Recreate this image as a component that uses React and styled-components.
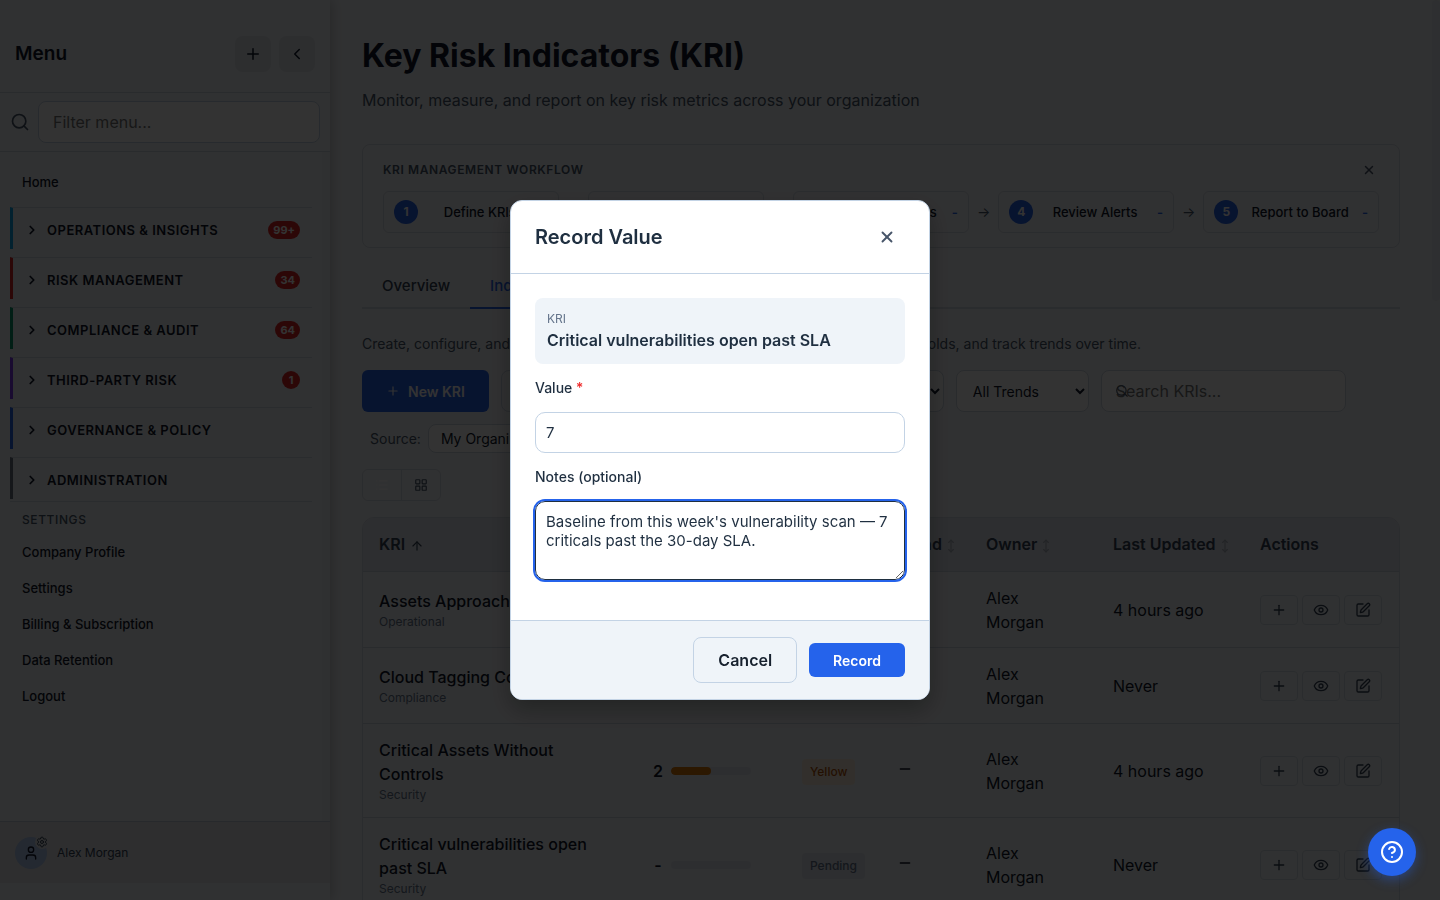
import React, { useState } from 'react';
import styled, { createGlobalStyle } from 'styled-components';
import {
  Plus,
  Minus,
  ChevronLeft,
  ChevronRight,
  Search,
  User,
  Settings,
  X,
  List,
  LayoutGrid,
  ArrowUp,
  MoveVertical,
  Eye,
  SquarePen,
  CircleQuestionMark,
} from 'lucide-react';

const GlobalStyle = createGlobalStyle`
  * {
    box-sizing: border-box;
  }
  body {
    margin: 0;
    background: #f1f5f9;
    color: #0f172a;
    font-family: Inter, "Liberation Sans", sans-serif;
    font-size: 16px;
    line-height: 24px;
  }
  button, input, select, textarea {
    font-family: inherit;
  }
  button {
    cursor: pointer;
  }
`;

const Shell = styled.div`
  display: flex;
  height: 100vh;
  overflow: hidden;
`;

/* ---------- Sidebar ---------- */

const Sidebar = styled.aside`
  display: flex;
  flex-direction: column;
  flex: 0 0 330px;
  padding-bottom: 17px;
  background: #eff3f7;
  box-shadow: 2px 0 12px rgba(0, 0, 0, 0.2);
  z-index: 1;
`;

const SidebarHeader = styled.div`
  display: flex;
  align-items: center;
  gap: 8px;
  padding: 36px 15px 20px;
  border-bottom: 1px solid #cbd5e1;
`;

const SidebarTitle = styled.h2`
  flex: 1;
  margin: 0;
  font-size: 19px;
  font-weight: 600;
`;

const SquareButton = styled.button`
  display: grid;
  place-items: center;
  width: 36px;
  height: 36px;
  padding: 0;
  border: 0;
  border-radius: 8px;
  background: #e0e4ea;
  color: #0f172a;
`;

const FilterRow = styled.div`
  display: flex;
  align-items: center;
  gap: 8px;
  padding: 8px 10px;
  border-bottom: 1px solid #cbd5e1;
  color: #475569;
`;

const FilterInput = styled.input`
  flex: 1;
  min-width: 0;
  height: 42px;
  padding: 0 14px;
  border: 1px solid #c3d3e5;
  border-radius: 8px;
  background: #fff;
  font-size: 16px;
`;

const Nav = styled.nav`
  flex: 1;
  min-height: 0;
  padding: 20px 10px 0;
  overflow: hidden;
  border-right: 8px solid #eaeef3;
`;

const NavLink = styled.a`
  display: block;
  padding: 0 12px;
  margin-bottom: 16px;
  color: #0f172a;
  font-size: 13px;
  font-weight: 500;
  line-height: 20px;
  text-decoration: none;
`;

const NavGroups = styled.div`
  margin-top: -1px;
`;

const NavGroup = styled.button`
  display: flex;
  align-items: center;
  width: 100%;
  height: 42px;
  margin-bottom: 8px;
  padding: 2px 12px 0 12px;
  border: 0;
  border-top: 1px solid #d3dbe4;
  border-left: 3px solid ${(props) => props.$color};
  background: none;
  color: #0f172a;
  font-size: 13px;
  font-weight: 600;
  letter-spacing: 0.5px;
  text-align: left;

  span {
    flex: 1;
    margin-left: 8px;
  }
`;

const Count = styled.b`
  min-width: 18px;
  padding: 0 5px;
  border-radius: 9px;
  background: #dc2626;
  color: #fff;
  font-size: 11px;
  font-weight: 700;
  line-height: 18px;
  letter-spacing: 0;
  text-align: center;
`;

const NavSection = styled.h3`
  margin: -6px 0 12px;
  padding: 8px 12px 0;
  border-top: 1px solid #d3dbe4;
  color: #475569;
  font-size: 12px;
  font-weight: 500;
  line-height: 20px;
  letter-spacing: 0.05em;
`;

const UserBar = styled.div`
  display: flex;
  align-items: center;
  gap: 10px;
  height: 62px;
  padding: 0 15px;
  border-top: 1px solid #c3cedb;
  background: #e3e7ec;
  color: #334155;
  font-size: 12px;
`;

const Avatar = styled.div`
  position: relative;
  display: grid;
  place-items: center;
  width: 32px;
  height: 32px;
  border-radius: 50%;
  background: #b4caf2;
  color: #0f172a;
`;

const AvatarGear = styled.span`
  position: absolute;
  top: -2px;
  right: -2px;
  display: grid;
  place-items: center;
  width: 14px;
  height: 14px;
  border-radius: 50%;
  background: #e3e7ec;
  color: #334155;
`;

/* ---------- Main page ---------- */

const Main = styled.main`
  flex: 1;
  min-width: 0;
  padding: 32px 40px 0 32px;
  overflow: hidden;
`;

const PageTitle = styled.h1`
  margin: 0;
  font-size: 32px;
  font-weight: 700;
  line-height: 48px;
`;

const Subtitle = styled.p`
  margin: 8px 0 32px;
  color: #475569;
`;

const Workflow = styled.section`
  padding: 16px 20px 14px;
  border: 1px solid #d3dbe4;
  border-radius: 8px;
`;

const WorkflowHead = styled.div`
  display: flex;
  justify-content: space-between;
  align-items: center;
  height: 18px;
  margin-bottom: 12px;

  h2 {
    margin: 0;
    color: #475569;
    font-size: 12px;
    font-weight: 600;
    line-height: 18px;
    letter-spacing: 0.05em;
  }
`;

const PlainButton = styled.button`
  display: grid;
  place-items: center;
  width: ${(props) => props.$size}px;
  height: ${(props) => props.$size}px;
  padding: 0;
  border: 0;
  background: none;
  color: #475569;
`;

const Steps = styled.div`
  display: flex;
  align-items: center;
  gap: 8px;
  color: #475569;
  font-size: 14px;
`;

const Step = styled.button`
  display: flex;
  flex: 1;
  align-items: center;
  gap: 8px;
  height: 42px;
  padding: 0 10px;
  border: 1px solid #d3dbe4;
  border-radius: 6px;
  background: none;
  color: #0f172a;
  font-size: 13px;
  font-weight: 500;

  b {
    width: 24px;
    border-radius: 50%;
    background: #2563eb;
    color: #fff;
    font-size: 12px;
    font-weight: 700;
    line-height: 24px;
  }
  span {
    flex: 1;
    white-space: nowrap;
  }
  i {
    color: #2563eb;
    font-style: normal;
    font-weight: 600;
  }
`;

const Tabs = styled.div`
  display: flex;
  margin-top: 16px;
  border-bottom: 2px solid #d3dbe4;
`;

const Tab = styled.button`
  margin-bottom: -2px;
  padding: 10px 20px 9px;
  border: 0;
  border-bottom: 2px solid ${(props) => (props.$active ? '#2563eb' : 'transparent')};
  background: none;
  color: ${(props) => (props.$active ? '#2563eb' : '#334155')};
  font-size: 15px;
  font-weight: 500;
  line-height: 24px;
`;

const Intro = styled.p`
  margin: 23px 0 14px;
  color: #475569;
  font-size: 14px;
  white-space: nowrap;
`;

const Toolbar = styled.div`
  display: flex;
  align-items: center;
  gap: 12px;
`;

const PrimaryButton = styled.button`
  display: flex;
  align-items: center;
  gap: 8px;
  height: 42px;
  padding: 0 24px;
  border: 0;
  border-radius: 6px;
  background: #2563eb;
  color: #fff;
  font-size: 14px;
  font-weight: 600;
`;

const OutlineButton = styled.button`
  width: 119px;
  height: 42px;
  border: 1px solid #cbd5e1;
  border-radius: 8px;
  background: none;
  color: #0f172a;
  font-size: 14px;
  font-weight: 500;
`;

const FilterSelect = styled.select`
  width: ${(props) => props.$width}px;
  height: ${(props) => (props.$small ? 29 : 42)}px;
  padding: 0 ${(props) => (props.$small ? 8 : 12)}px;
  padding-right: 0;
  border: 1px solid #cbd5e1;
  border-radius: 8px;
  background: #fff;
  color: #0f172a;
  font-size: 14px;
`;

const SearchBox = styled.label`
  position: relative;
  flex: 0 1 245px;

  svg {
    position: absolute;
    top: 14px;
    left: 14px;
    color: #475569;
  }
  input {
    width: 100%;
    height: 42px;
    padding: 0 14px;
    border: 1px solid #cbd5e1;
    border-radius: 8px;
    background: #fff;
    font-size: 16px;
  }
`;

const SourceRow = styled.label`
  display: flex;
  align-items: center;
  gap: 7px;
  margin: 12px 0 16px;
  padding-left: 8px;
  color: #475569;
  font-size: 14px;
`;

const ViewToggle = styled.div`
  display: inline-flex;
  height: 32px;
  margin-bottom: 16px;
  border: 1px solid #d3dbe4;
  border-radius: 6px;
  vertical-align: top;

  button {
    display: grid;
    place-items: center;
    width: 38px;
    padding: 0;
    border: 0;
    background: none;
    color: #475569;
  }
  button:first-child {
    width: 39px;
    border-right: 1px solid #d3dbe4;
    color: #fff;
  }
`;

const TableCard = styled.div`
  overflow: hidden;
  border: 1px solid #d3dbe4;
  border-radius: 12px;
`;

const Table = styled.table`
  width: 100%;
  border-collapse: collapse;
  table-layout: fixed;

  th {
    padding: 14px 16px 15px;
    border-bottom: 1px solid #cbd5e1;
    background: #e1e5ed;
    color: #334155;
    font-weight: 600;
    text-align: left;
    white-space: nowrap;
  }
  th svg {
    vertical-align: -3px;
  }
  td {
    padding: 14px 16px 13px;
    border-bottom: 1px solid #cbd5e1;
    vertical-align: middle;
  }
`;

const SortedIcon = styled(ArrowUp)`
  margin-left: 5px;
`;

const SortIcon = styled(MoveVertical)`
  margin-left: 2px;
  opacity: 0.3;
`;

const KriName = styled.div`
  max-width: 224px;
  font-weight: 500;
`;

const Category = styled.div`
  color: #64748b;
  font-size: 12px;
  line-height: 18px;
`;

const ValueCell = styled.div`
  display: flex;
  align-items: center;
  gap: 8px;
  font-weight: 600;

  span {
    min-width: 10px;
    text-align: center;
  }
`;

const Meter = styled.div`
  width: 80px;
  height: 8px;
  overflow: hidden;
  border-radius: 4px;
  background: #e2e6f0;

  div {
    height: 100%;
    border-radius: 4px;
    background: #d97706;
  }
`;

const statusColors = {
  Yellow: { background: '#f7ecdc', color: '#b45309' },
  Pending: { background: '#e0e4ee', color: '#64748b' },
  Green: { background: '#dcfce7', color: '#15803d' },
};

const Status = styled.span`
  display: inline-block;
  padding: 4px 8px;
  border-radius: 4px;
  background: ${(props) => statusColors[props.$status].background};
  color: ${(props) => statusColors[props.$status].color};
  font-size: 12px;
  font-weight: 500;
  line-height: 18px;
`;

const Actions = styled.div`
  display: flex;
  gap: 4px;

  button {
    display: grid;
    place-items: center;
    width: 38px;
    height: 30px;
    padding: 0;
    border: 1px solid #d3dbe4;
    border-radius: 4px;
    background: none;
    color: #334155;
  }
`;

// thumb of the page scrollbar
const ScrollThumb = styled.div`
  position: fixed;
  top: 0;
  right: 0;
  width: 8px;
  height: 301px;
  border-radius: 4px;
  background: #e6e9f2;
`;

/* ---------- Modal ---------- */

const Overlay = styled.div`
  position: fixed;
  inset: 0;
  z-index: 10;
  display: grid;
  place-items: center;
  background: rgba(0, 0, 0, 0.8);
`;

const Dialog = styled.form`
  width: 420px;
  overflow: hidden;
  border: 1px solid #c3d3e5;
  border-radius: 12px;
  background: #fff;
  box-shadow: 0 10px 25px rgba(0, 0, 0, 0.3);
  color: #1f2f40;
`;

const DialogHeader = styled.header`
  display: flex;
  align-items: center;
  justify-content: space-between;
  padding: 18px 24px;
  border-bottom: 1px solid #c3d3e5;

  h2 {
    margin: 0;
    font-size: 20px;
    font-weight: 600;
    line-height: 28px;
  }
`;

const DialogBody = styled.div`
  display: flex;
  flex-direction: column;
  gap: 12px;
  padding: 24px 24px 40px;
`;

const KriBox = styled.div`
  padding: 12px;
  border-radius: 8px;
  background: #eff4f9;
  font-weight: 600;

  small {
    display: block;
    color: #64748b;
    font-size: 12px;
    font-weight: 400;
    line-height: 18px;
  }
`;

const Label = styled.label`
  font-size: 14px;
  font-weight: 500;

  span {
    color: #ef2b2b;
  }
`;

const ValueInput = styled.input`
  height: 41px;
  padding: 0 10px;
  border: 1px solid #c3d3e5;
  border-radius: 10px;
  color: #1f2f40;
  font-size: 15px;
`;

const Notes = styled.textarea`
  height: 79px;
  padding: 10px;
  border: 1px solid #1f2f40;
  border-radius: 10px;
  outline: 2px solid #2563eb;
  color: #1f2f40;
  font-size: 15px;
  line-height: 19px;
  resize: vertical;
`;

const DialogFooter = styled.footer`
  display: flex;
  align-items: center;
  justify-content: flex-end;
  gap: 12px;
  padding: 16px 24px;
  border-top: 1px solid #c3d3e5;
  background: #eff4f9;
`;

const CancelButton = styled.button`
  height: 46px;
  padding: 0 24px;
  border: 1px solid #c3d3e5;
  border-radius: 8px;
  background: none;
  color: #17212e;
  font-size: 16px;
  font-weight: 600;
`;

const RecordButton = styled.button`
  height: 34px;
  padding: 0 24px;
  border: 0;
  border-radius: 6px;
  background: #2563eb;
  color: #fff;
  font-size: 14px;
  font-weight: 600;
`;

const HelpButton = styled.button`
  position: fixed;
  right: 24px;
  bottom: 24px;
  z-index: 20;
  display: grid;
  place-items: center;
  width: 48px;
  height: 48px;
  padding: 0;
  border: 0;
  border-radius: 50%;
  background: #2563eb;
  box-shadow: 0 4px 12px rgba(37, 99, 235, 0.4);
  color: #fff;
`;

const groups = [
  { name: 'OPERATIONS & INSIGHTS', color: '#0ea5e9', count: '99+' },
  { name: 'RISK MANAGEMENT', color: '#dc2626', count: '34' },
  { name: 'COMPLIANCE & AUDIT', color: '#059669', count: '64' },
  { name: 'THIRD-PARTY RISK', color: '#7c3aed', count: '1' },
  { name: 'GOVERNANCE & POLICY', color: '#2563eb' },
  { name: 'ADMINISTRATION', color: '#6b7280' },
];

const settingsLinks = ['Company Profile', 'Settings', 'Billing & Subscription', 'Data Retention', 'Logout'];

const steps = ['Define KRIs', 'Record Values', 'Set Thresholds', 'Review Alerts', 'Report to Board'];

const rows = [
  { name: 'Assets Approaching EOL', category: 'Operational', value: '0', percent: 0, status: 'Green', updated: '4 hours ago' },
  { name: 'Cloud Tagging Coverage', category: 'Compliance', value: '-', percent: 0, status: 'Pending', updated: 'Never' },
  { name: 'Critical Assets Without Controls', category: 'Security', value: '2', percent: 50, status: 'Yellow', updated: '4 hours ago' },
  { name: 'Critical vulnerabilities open past SLA', category: 'Security', value: '-', percent: 0, status: 'Pending', updated: 'Never' },
];

const SidebarPanel = () => (
  <Sidebar>
    <SidebarHeader>
      <SidebarTitle>Menu</SidebarTitle>
      <SquareButton aria-label="Add"><Plus size={18} /></SquareButton>
      <SquareButton aria-label="Collapse menu"><ChevronLeft size={18} /></SquareButton>
    </SidebarHeader>
    <FilterRow>
      <Search size={20} />
      <FilterInput placeholder="Filter menu..." aria-label="Filter menu" />
    </FilterRow>
    <Nav>
      <NavLink href="#home">Home</NavLink>
      <NavGroups>
        {groups.map((group) => (
          <NavGroup key={group.name} $color={group.color}>
            <ChevronRight size={14} strokeWidth={3} />
            <span>{group.name}</span>
            {group.count && <Count>{group.count}</Count>}
          </NavGroup>
        ))}
      </NavGroups>
      <NavSection>SETTINGS</NavSection>
      {settingsLinks.map((link) => (
        <NavLink key={link} href="#settings">{link}</NavLink>
      ))}
    </Nav>
    <UserBar>
      <Avatar>
        <User size={16} />
        <AvatarGear><Settings size={12} /></AvatarGear>
      </Avatar>
      Alex Morgan
    </UserBar>
  </Sidebar>
);

const KriTable = () => (
  <TableCard>
    <Table>
      <colgroup>
        <col />
        <col width="149" />
        <col width="95" />
        <col width="89" />
        <col width="127" />
        <col width="147" />
        <col width="155" />
      </colgroup>
      <thead>
        <tr>
          <th>KRI<SortedIcon size={14} /></th>
          <th>Current</th>
          <th>Status</th>
          <th>Trend<SortIcon size={14} /></th>
          <th>Owner<SortIcon size={14} /></th>
          <th>Last Updated<SortIcon size={14} /></th>
          <th>Actions</th>
        </tr>
      </thead>
      <tbody>
        {rows.map((row) => (
          <tr key={row.name}>
            <td>
              <KriName>{row.name}</KriName>
              <Category>{row.category}</Category>
            </td>
            <td>
              <ValueCell>
                <span>{row.value}</span>
                <Meter><div style={{ width: `${row.percent}%` }} /></Meter>
              </ValueCell>
            </td>
            <td><Status $status={row.status}>{row.status}</Status></td>
            <td><Minus size={16} /></td>
            <td>Alex Morgan</td>
            <td>{row.updated}</td>
            <td>
              <Actions>
                <button aria-label="Record value"><Plus size={16} /></button>
                <button aria-label="View"><Eye size={16} /></button>
                <button aria-label="Edit"><SquarePen size={16} /></button>
              </Actions>
            </td>
          </tr>
        ))}
      </tbody>
    </Table>
  </TableCard>
);

const RecordValueDialog = () => {
  const [value, setValue] = useState('7');
  const [notes, setNotes] = useState("Baseline from this week's vulnerability scan — 7 criticals past the 30-day SLA.");

  return (
    <Overlay>
      <Dialog role="dialog" aria-label="Record Value" onSubmit={(e) => e.preventDefault()}>
        <DialogHeader>
          <h2>Record Value</h2>
          <PlainButton type="button" $size={36} aria-label="Close"><X size={18} strokeWidth={2.5} /></PlainButton>
        </DialogHeader>
        <DialogBody>
          <KriBox>
            <small>KRI</small>
            Critical vulnerabilities open past SLA
          </KriBox>
          <Label htmlFor="kri-value">Value <span>*</span></Label>
          <ValueInput id="kri-value" value={value} onChange={(e) => setValue(e.target.value)} />
          <Label htmlFor="kri-notes">Notes (optional)</Label>
          <Notes id="kri-notes" value={notes} onChange={(e) => setNotes(e.target.value)} />
        </DialogBody>
        <DialogFooter>
          <CancelButton type="button">Cancel</CancelButton>
          <RecordButton type="submit">Record</RecordButton>
        </DialogFooter>
      </Dialog>
    </Overlay>
  );
};

const App = () => (
  <>
    <GlobalStyle />
    <Shell>
      <SidebarPanel />
      <Main>
        <PageTitle>Key Risk Indicators (KRI)</PageTitle>
        <Subtitle>Monitor, measure, and report on key risk metrics across your organization</Subtitle>

        <Workflow>
          <WorkflowHead>
            <h2>KRI MANAGEMENT WORKFLOW</h2>
            <PlainButton $size={20} aria-label="Dismiss"><X size={14} strokeWidth={2.5} /></PlainButton>
          </WorkflowHead>
          <Steps>
            {steps.map((step, i) => (
              <React.Fragment key={step}>
                {i > 0 && '→'}
                <Step>
                  <b>{i + 1}</b>
                  <span>{step}</span>
                  <i>-</i>
                </Step>
              </React.Fragment>
            ))}
          </Steps>
        </Workflow>

        <Tabs role="tablist">
          <Tab role="tab">Overview</Tab>
          <Tab role="tab" $active>Indicators</Tab>
        </Tabs>

        <Intro>
          Create, configure, and manage your key risk indicators. Record values, set risk thresholds, and track trends over time.
        </Intro>

        <Toolbar>
          <PrimaryButton><Plus size={14} strokeWidth={2} />New KRI</PrimaryButton>
          <OutlineButton>Export</OutlineButton>
          <FilterSelect $width={170} aria-label="Category"><option>All Categories</option></FilterSelect>
          <FilterSelect $width={130} aria-label="Status"><option>All Statuses</option></FilterSelect>
          <FilterSelect $width={133} aria-label="Trend"><option>All Trends</option></FilterSelect>
          <SearchBox>
            <input placeholder="Search KRIs..." aria-label="Search KRIs" />
            <Search size={14} />
          </SearchBox>
        </Toolbar>
        <SourceRow>
          Source:
          <FilterSelect $small $width={160}><option>My Organization</option></FilterSelect>
        </SourceRow>
        <ViewToggle>
          <button aria-label="List view"><List size={14} /></button>
          <button aria-label="Grid view"><LayoutGrid size={14} /></button>
        </ViewToggle>

        <KriTable />
      </Main>
    </Shell>
    <ScrollThumb />
    <RecordValueDialog />
    <HelpButton aria-label="Help"><CircleQuestionMark size={24} /></HelpButton>
  </>
);

export default App;
